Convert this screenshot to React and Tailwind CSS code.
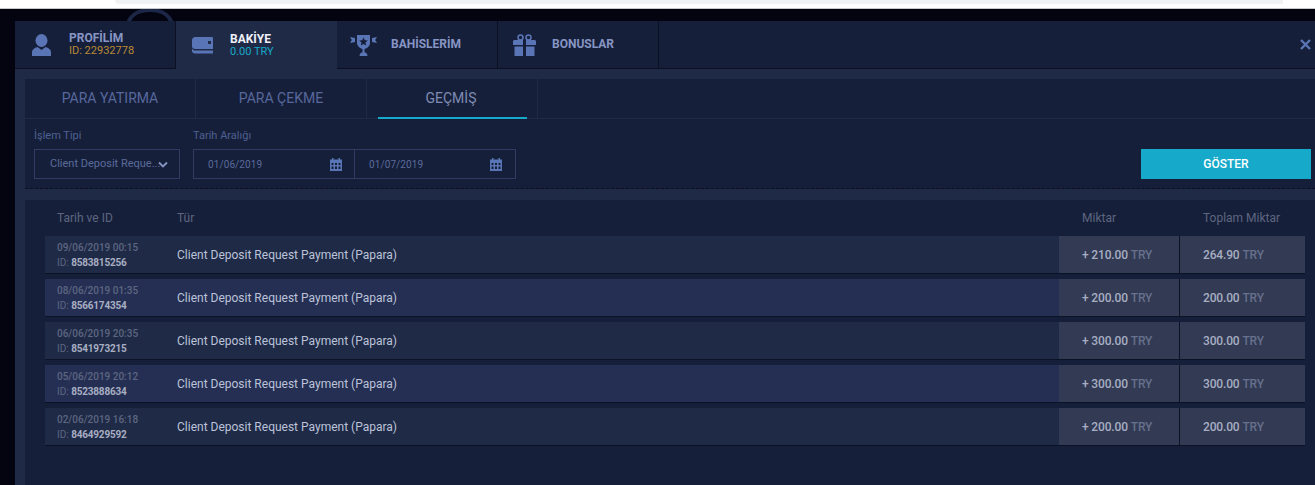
const rows = [
  { date: '09/06/2019 00:15', id: '8583815256', amount: '+ 210.00', total: '264.90' },
  { date: '08/06/2019 01:35', id: '8566174354', amount: '+ 200.00', total: '200.00' },
  { date: '06/06/2019 20:35', id: '8541973215', amount: '+ 300.00', total: '300.00' },
  { date: '05/06/2019 20:12', id: '8523888634', amount: '+ 300.00', total: '300.00' },
  { date: '02/06/2019 16:18', id: '8464929592', amount: '+ 200.00', total: '200.00' },
]

function UserIcon() {
  return (
    <svg width="19" height="22" viewBox="0 0 19 22" fill="#5a75b5">
      <ellipse cx="9.500" cy="6.500" rx="6" ry="6.500" />
      <path d="M5.500 13 L9.500 16 L13.500 13 C16.500 14 19 15.500 19 18 L19 22 L0 22 L0 18 C0 15.500 2.500 14 5.500 13 Z" />
    </svg>
  )
}

function WalletIcon() {
  return (
    <svg width="21" height="17" viewBox="0 0 21 17" fill="#5a75b5">
      <path fillRule="evenodd" d="M3 0 H20 C20.500 0 21 0.500 21 1 V12 H3 C1.500 12 0 11 0 9.500 V3 C0 1.500 1.500 0 3 0 Z M16 4 V7 H19 V4 Z" />
      <path d="M0 11.500 C1 13 2 13.500 3 13.500 H21 V16.500 H3 C1.500 16.500 0 15.500 0 14 Z" />
    </svg>
  )
}

function TrophyIcon() {
  return (
    <svg width="27" height="22" viewBox="0 0 27 22" fill="#5a75b5">
      <path fillRule="evenodd" d="M7 1 H20 V9 C20 12.500 16.500 14.500 13.500 15.500 C10.500 14.500 7 12.500 7 9 Z M13.500 3.500 L14.800 6.300 L17.800 6.600 L15.500 8.600 L16.200 11.500 L13.500 10 L10.800 11.500 L11.500 8.600 L9.200 6.600 L12.200 6.300 Z" />
      <path d="M0 3 L5 4 V8 L0 9 L1.800 6 Z" />
      <path d="M27 3 L22 4 V8 L27 9 L25.200 6 Z" />
      <rect x="12.500" y="15" width="2" height="3" />
      <path d="M9.500 22 C9.500 19.500 11.500 18 13.500 18 C15.500 18 17.500 19.500 17.500 22 Z" />
    </svg>
  )
}

function GiftIcon() {
  return (
    <svg width="23" height="22" viewBox="0 0 23 22">
      <circle cx="7.500" cy="3.500" r="2.500" fill="none" stroke="#5a75b5" strokeWidth="1.500" />
      <circle cx="15.500" cy="3.500" r="2.500" fill="none" stroke="#5a75b5" strokeWidth="1.500" />
      <path fill="#5a75b5" d="M1 6 H10 V11 H0 V7 Z M13 6 H22 L23 7 V11 H13 Z M1.500 12.500 H10 V22 H1.500 Z M13 12.500 H21.500 V22 H13 Z" />
    </svg>
  )
}

function CalendarIcon() {
  return (
    <svg width="12" height="13" viewBox="0 0 12 13" fill="#5a75b5">
      <path fillRule="evenodd" d="M2 0 H3.500 V1.500 H8.500 V0 H10 V1.500 H12 V13 H0 V1.500 H2 Z M1.500 5 V7 H3.500 V5 Z M5 5 V7 H7 V5 Z M8.500 5 V7 H10.500 V5 Z M1.500 8.500 V11 H3.500 V8.500 Z M5 8.500 V11 H7 V8.500 Z M8.500 8.500 V11 H10.500 V8.500 Z" />
    </svg>
  )
}

function MainTab({ icon, title, sub, subClass, active, titleClass }) {
  return (
    <div
      className={`w-[161px] h-full flex items-center shrink-0 ${
        active ? 'bg-[#1f2a47]' : 'border-r border-r-[#0b1122] border-b border-b-[#0b1122]'
      }`}
    >
      <div className="w-[53px] flex justify-center shrink-0">{icon}</div>
      <div className="ml-[1px]">
        <div className={`text-[12px] leading-[13px] font-bold ${titleClass}`}>{title}</div>
        {sub && <div className={`text-[11px] leading-[12px] ${subClass}`}>{sub}</div>}
      </div>
    </div>
  )
}

function SubTab({ label, active }) {
  return (
    <div className="w-[171px] h-full shrink-0 border-r border-r-[#1f2a47] relative flex items-center justify-center">
      <span className={`text-[14px] ${active ? 'text-[#7f8cb3] mr-[2px]' : 'text-[#56689c]'}`}>{label}</span>
      {active && <div className="absolute bottom-[-1px] left-[11px] right-[10px] h-[2px] bg-[#17a9c9]" />}
    </div>
  )
}

function HistoryRow({ row, even }) {
  return (
    <div className={`h-[38px] flex border-b border-b-[#0c1226] ${even ? 'bg-[#252f54]' : 'bg-[#1f2a47]'}`}>
      <div className="w-[132px] pl-[12px] pt-[4px] shrink-0">
        <div className="text-[10px] leading-[15px] font-medium text-[#5d6680]">{row.date}</div>
        <div className="text-[10px] leading-[15px] text-[#5d6680]">
          ID: <span className="font-bold tracking-[-0.2px] text-[#a7aec2]">{row.id}</span>
        </div>
      </div>
      <div className="flex-1 flex items-center text-[12px] text-[#bcc3d8]">Client Deposit Request Payment (Papara)</div>
      <div className="w-[121px] bg-[#323a54] flex items-center pl-[23px] text-[12px] tracking-[-0.15px] font-medium text-[#a7aec2] border-r border-r-[#0c1226]">
        {row.amount}&nbsp;<span className="text-[#67708c]">TRY</span>
      </div>
      <div className="w-[125px] bg-[#323a54] flex items-center pl-[23px] text-[12px] tracking-[-0.15px] font-medium text-[#a7aec2]">
        {row.total}&nbsp;<span className="text-[#67708c]">TRY</span>
      </div>
    </div>
  )
}

export default function App() {
  return (
    <div className="h-[485px] w-[1315px] overflow-hidden flex flex-col bg-[#03040f] font-['Roboto',sans-serif]">
      {/* Page strip above the modal */}
      <div className="h-[9px] shrink-0 bg-white border-b border-b-[#c8c9cc] relative">
        <div className="absolute left-[115px] right-[32px] top-0 h-[4px] bg-[#f1f2f4] rounded-bl-[4px]" />
      </div>

      <div className="flex-1 pt-[12px] pl-[15px] relative">
        <svg className="absolute left-[125px] top-0" width="50" height="12" viewBox="0 0 50 12" fill="none">
          <path d="M3 14 C8 2 18 1 25 1 C32 1 42 2 47 14" stroke="#1c2747" strokeWidth="4" />
        </svg>

        <div className="h-full bg-[#1f2a47] flex flex-col relative">
          {/* Main tabs */}
          <div className="h-[48px] shrink-0 bg-[#161f3a] flex">
            <MainTab icon={<UserIcon />} title="PROFİLİM" titleClass="text-[#8695c4]" sub="ID: 22932778" subClass="text-[#b98a35]" />
            <MainTab active icon={<WalletIcon />} title="BAKİYE" titleClass="text-[#eef0f7]" sub="0.00 TRY" subClass="text-[#17a9c9]" />
            <MainTab icon={<TrophyIcon />} title="BAHİSLERİM" titleClass="text-[#8695c4]" />
            <MainTab icon={<GiftIcon />} title="BONUSLAR" titleClass="text-[#8695c4]" />
            <div className="flex-1 border-b border-b-[#0b1122] flex items-center justify-end pr-[4px]">
              <svg width="11" height="11" viewBox="0 0 11 11" stroke="#5a75b5" strokeWidth="2.400">
                <path d="M1 1 L10 10 M10 1 L1 10" />
              </svg>
            </div>
          </div>

          <div className="flex-1 pl-[10px] pt-[10px] flex flex-col gap-[11px]">
            {/* Filters panel */}
            <div className="h-[110px] shrink-0 bg-[#161f3a] border-b border-dashed border-b-[#0b1122]">
              <div className="h-[40px] flex border-b border-b-[#1f2a47]">
                <SubTab label="PARA YATIRMA" />
                <SubTab label="PARA ÇEKME" />
                <SubTab label="GEÇMİŞ" active />
              </div>
              <div className="flex pl-[9px] pt-[10px]">
                <div className="w-[146px] shrink-0">
                  <div className="text-[11px] leading-[14px] text-[#4e6090] mb-[6px]">İşlem Tipi</div>
                  <div className="h-[30px] border border-[#303c61] flex items-center pl-[15px] text-[11px] text-[#5a6b9a]">
                    <span>Client Deposit Reque...</span>
                    <svg className="ml-[-2px]" width="10" height="7" viewBox="0 0 10 7" fill="none" stroke="#8695c4" strokeWidth="1.800">
                      <path d="M1 1.500 L5 5.500 L9 1.500" />
                    </svg>
                  </div>
                </div>
                <div className="ml-[13px] w-[323px] shrink-0">
                  <div className="text-[11px] leading-[14px] text-[#4e6090] mb-[6px]">Tarih Aralığı</div>
                  <div className="h-[30px] border border-[#303c61] flex text-[10px] tracking-[0.1px] text-[#5a6b9a]">
                    <div className="w-[161px] border-r border-r-[#303c61] flex items-center justify-between pl-[14px] pr-[12px]">
                      <span>01/06/2019</span>
                      <CalendarIcon />
                    </div>
                    <div className="flex-1 flex items-center justify-between pl-[14px] pr-[13px]">
                      <span>01/07/2019</span>
                      <CalendarIcon />
                    </div>
                  </div>
                </div>
                <button className="ml-auto mt-[20px] mr-[4px] w-[170px] h-[30px] bg-[#17a9c9] text-[12px] font-medium text-white">
                  GÖSTER
                </button>
              </div>
            </div>

            {/* History table */}
            <div className="flex-1 bg-[#161f3a] pl-[20px] pr-[10px]">
              <div className="h-[36px] flex items-center text-[12px] text-[#5d6680]">
                <div className="w-[132px] pl-[12px] shrink-0">Tarih ve ID</div>
                <div className="flex-1">Tür</div>
                <div className="w-[121px] pl-[23px]">Miktar</div>
                <div className="w-[125px] pl-[23px]">Toplam Miktar</div>
              </div>
              <div className="flex flex-col gap-[5px]">
                {rows.map((row, i) => (
                  <HistoryRow key={row.id} row={row} even={i % 2 === 1} />
                ))}
              </div>
            </div>
          </div>
        </div>
      </div>
    </div>
  )
}
